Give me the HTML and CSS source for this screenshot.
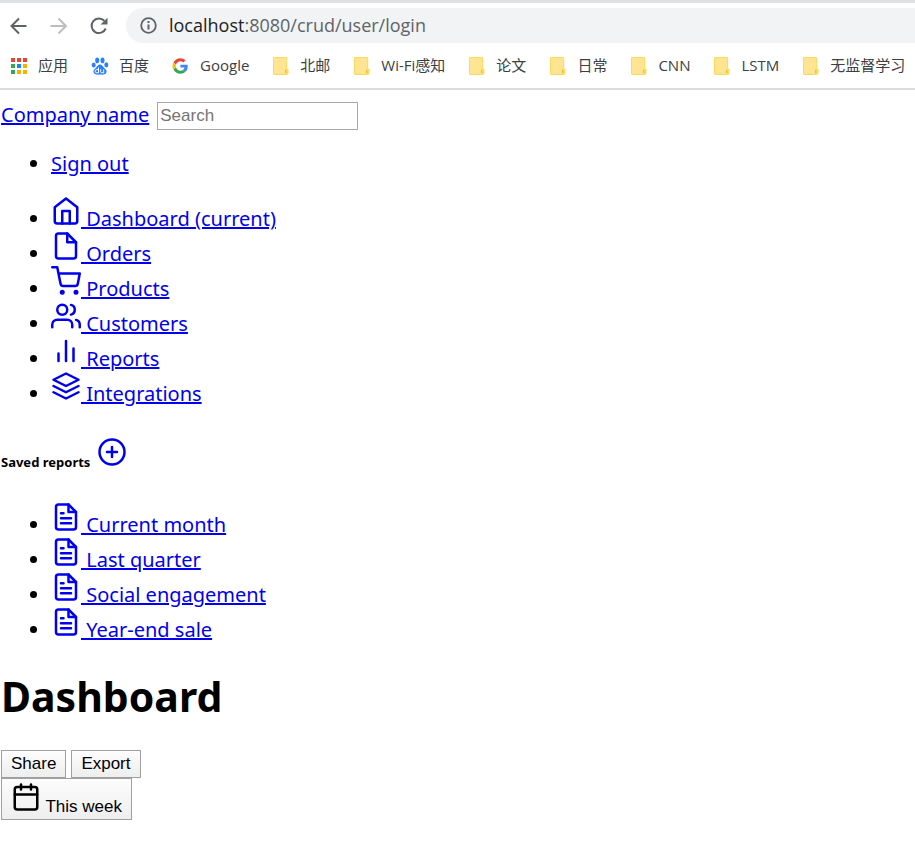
FILE: index.html
```html
<!DOCTYPE html>
<html lang="zh-CN">
<head>
<meta charset="utf-8">
<title>Dashboard</title>
<link rel="stylesheet" href="styles.css">
</head>
<body>
<svg class="defs" aria-hidden="true">
  <symbol id="folder" viewBox="0 0 18 18"><path d="M2 0h12q1 0 1 1v11h1v5q0 1-1 1H2q-1 0-1-1V1q0-1 1-1z" fill="#ffe591"/><path d="M1.500 17V1.500q0-1 1-1H14q.7 0 .7 1V11" fill="none" stroke="#ffd95c"/><path d="M2 17.500h12" stroke="#fbd75f"/><path d="M13 17.500v-5q0-1 1-1h1.500q1 0 1 1V16q0 1.500-1.500 1.500z" fill="#ffdc60"/><path d="M13 16v-3h1.300v3z" fill="#e8c13f"/></symbol>
  <symbol id="file-text" viewBox="0 0 24 24"><path d="M14 2H6a2 2 0 0 0-2 2v16a2 2 0 0 0 2 2h12a2 2 0 0 0 2-2V8z"/><path d="M14 2v6h6M16 13H8M16 17H8M10 9H8"/></symbol>
</svg>
<header class="browser">
  <div class="toolbar">
    <button class="tool" aria-label="Back"><svg width="18" height="18" viewBox="0 0 18 18"><path d="M16.500 9H2M9 1.500L1.500 9 9 16.500" fill="none" stroke="#5f6368" stroke-width="2"/></svg></button>
    <button class="tool" aria-label="Forward"><svg width="18" height="18" viewBox="0 0 18 18"><path d="M.5 9h15M8.500 1.500L16 9 8.500 16.500" fill="none" stroke="#bcbec0" stroke-width="2"/></svg></button>
    <button class="tool" aria-label="Reload"><svg width="18" height="18" viewBox="0 0 18 18"><path d="M14.300 3.800A7.300 7.300 0 1 0 15.700 11.500" fill="none" stroke="#5f6368" stroke-width="2"/><path d="M17.500.8V7.500H10.500z" fill="#5f6368"/></svg></button>
    <div class="address">
      <svg width="17" height="17" viewBox="0 0 17 17"><circle cx="8.500" cy="8.500" r="7.300" fill="none" stroke="#5f6368" stroke-width="1.800"/><path d="M8.500 4v2M8.500 7.500v5" stroke="#5f6368" stroke-width="2"/></svg>
      <span class="url"><b>localhost</b>:8080/crud/user/login</span>
    </div>
  </div>
  <nav class="bookmarks">
    <a href="#"><svg viewBox="0 0 18 18"><path fill="#ea4335" d="M1 1h4v4H1zM7 1h4v4H7zM13 1h4v4h-4z"/><path fill="#34a853" d="M1 7h4v4H1zM1 13h4v4H1z"/><path fill="#1a86f0" d="M7 7h4v4H7z"/><path fill="#fbb000" d="M13 7h4v4h-4zM7 13h4v4H7zM13 13h4v4h-4z"/></svg>应用</a>
    <a href="#"><svg viewBox="0 0 18 18"><g fill="#2b7fff"><ellipse cx="2.700" cy="8" rx="2" ry="2.600"/><ellipse cx="6.200" cy="3.400" rx="2" ry="2.800"/><ellipse cx="11.500" cy="3.400" rx="2" ry="2.800"/><ellipse cx="15.300" cy="7.800" rx="2" ry="2.600"/><path d="M9 7.500c2.200 0 2.700 2 4.300 3.400 1.800 1.500 2.500 2.500 2.200 4.200-.5 3-3.500 2.500-6.500 2.500s-6 .5-6.500-2.500c-.3-1.700.4-2.700 2.200-4.200C6.300 9.500 6.800 7.500 9 7.500z"/></g><path d="M7.500 10.500v5.300H5.800a1.600 1.600 0 0 1 0-3.200h1.700M9.700 12.300v2.500q0 1 1 1h2v-3.500" fill="none" stroke="#fff"/></svg>百度</a>
    <a href="#"><svg viewBox="-2 -4 56 56"><path fill="#EA4335" d="M24 9.500c3.540 0 6.710 1.220 9.210 3.600l6.850-6.850C35.900 2.380 30.470 0 24 0 14.620 0 6.510 5.380 2.560 13.220l7.980 6.190C12.430 13.720 17.740 9.500 24 9.500z"/><path fill="#4285F4" d="M46.980 24.550c0-1.570-.15-3.090-.38-4.550H24v9.020h12.940c-.58 2.960-2.260 5.480-4.780 7.180l7.730 6c4.510-4.180 7.090-10.360 7.090-17.650z"/><path fill="#FBBC05" d="M10.530 28.590A14.500 14.500 0 0 1 10.530 19.410L2.550 13.220a24 24 0 0 0 0 21.560z"/><path fill="#34A853" d="M24 48c6.480 0 11.930-2.130 15.890-5.810l-7.730-6c-2.150 1.450-4.920 2.300-8.160 2.300-6.260 0-11.570-4.220-13.470-9.910l-7.980 6.190C6.510 42.620 14.620 48 24 48z"/></svg>Google</a>
    <a href="#"><svg><use href="#folder"/></svg>北邮</a>
    <a href="#"><svg><use href="#folder"/></svg>Wi-Fi感知</a>
    <a href="#"><svg><use href="#folder"/></svg>论文</a>
    <a href="#"><svg><use href="#folder"/></svg>日常</a>
    <a href="#"><svg><use href="#folder"/></svg>CNN</a>
    <a href="#"><svg><use href="#folder"/></svg>LSTM</a>
    <a href="#"><svg><use href="#folder"/></svg>无监督学习</a>
  </nav>
</header>
<div class="page">
  <nav class="top">
    <a href="#">Company name</a>
    <input type="text" placeholder="Search" aria-label="Search">
  </nav>
  <ul class="list">
    <li><a href="#">Sign out</a></li>
  </ul>
  <ul class="list">
    <li><a href="#"><svg class="icon" viewBox="0 0 24 24"><path d="M3 9l9-7 9 7v11a2 2 0 0 1-2 2H5a2 2 0 0 1-2-2z"/><path d="M9 22V12h6v10"/></svg> Dashboard (current)</a></li>
    <li><a href="#"><svg class="icon" viewBox="0 0 24 24"><path d="M13 2H6a2 2 0 0 0-2 2v16a2 2 0 0 0 2 2h12a2 2 0 0 0 2-2V9z"/><path d="M13 2v7h7"/></svg> Orders</a></li>
    <li><a href="#"><svg class="icon" viewBox="0 0 24 24"><circle cx="9" cy="21" r="1"/><circle cx="20" cy="21" r="1"/><path d="M1 1h4l2.680 13.390a2 2 0 0 0 2 1.610h9.720a2 2 0 0 0 2-1.610L23 6H6"/></svg> Products</a></li>
    <li><a href="#"><svg class="icon" viewBox="0 0 24 24"><path d="M17 21v-2a4 4 0 0 0-4-4H5a4 4 0 0 0-4 4v2"/><circle cx="9" cy="7" r="4"/><path d="M23 21v-2a4 4 0 0 0-3-3.870M16 3.130a4 4 0 0 1 0 7.750"/></svg> Customers</a></li>
    <li><a href="#"><svg class="icon" viewBox="0 0 24 24"><path d="M18 20V10M12 20V4M6 20v-6"/></svg> Reports</a></li>
    <li><a href="#"><svg class="icon" viewBox="0 0 24 24"><path d="M12 2L2 7l10 5 10-5zM2 17l10 5 10-5M2 12l10 5 10-5"/></svg> Integrations</a></li>
  </ul>
  <h2 class="saved">Saved reports <a href="#" aria-label="Add a report"><svg class="icon" viewBox="0 0 24 24"><circle cx="12" cy="12" r="10"/><path d="M12 8v8M8 12h8"/></svg></a></h2>
  <ul class="list">
    <li><a href="#"><svg class="icon"><use href="#file-text"/></svg> Current month</a></li>
    <li><a href="#"><svg class="icon"><use href="#file-text"/></svg> Last quarter</a></li>
    <li><a href="#"><svg class="icon"><use href="#file-text"/></svg> Social engagement</a></li>
    <li><a href="#"><svg class="icon"><use href="#file-text"/></svg> Year-end sale</a></li>
  </ul>
  <main>
    <h1>Dashboard</h1>
    <div class="actions">
      <button>Share</button>
      <button>Export</button>
    </div>
    <button class="week"><svg class="icon" viewBox="0 0 24 24"><rect x="3" y="4" width="18" height="18" rx="2"/><path d="M16 2v4M8 2v4M3 10h18"/></svg> This week</button>
  </main>
</div>
</body>
</html>
```
FILE: styles.css
```css
* { box-sizing: border-box; }
body {
  margin: 0;
  background: #fff;
  color: #000;
  font: 20px/25px "Noto Sans", "Noto Sans CJK SC", sans-serif;
}
.defs { display: none; }

.browser {
  border-top: 3px solid #dee1e6;
  border-bottom: 2px solid #dadce0;
  overflow: hidden;
  font-family: "Open Sans", "Noto Sans CJK SC", sans-serif;
}
.toolbar {
  display: flex;
  align-items: center;
  gap: 22px;
  padding: 5px 0 0 10px;
}
.tool {
  display: flex;
  padding: 0;
  border: 0;
  background: none;
}
.address {
  flex: 1;
  display: flex;
  align-items: center;
  gap: 12px;
  height: 35px;
  margin-left: -4px;
  padding-left: 14px;
  border-radius: 18px 0 0 18px;
  background: #f1f3f4;
}
.url {
  color: #5f6368;
  font-size: 18px;
}
.url b {
  color: #202124;
  font-weight: 400;
}
.bookmarks {
  display: flex;
  gap: 23px;
  height: 45px;
  padding-left: 10px;
  align-items: center;
}
.bookmarks a {
  display: flex;
  align-items: center;
  gap: 10px;
  color: #3c4043;
  font-size: 15px;
  text-decoration: none;
  white-space: nowrap;
}
.bookmarks svg { width: 18px; height: 18px; }

.page { padding: 12px 1px 20px; }
.page a { color: #00e; }
.top {
  display: flex;
  align-items: flex-start;
  gap: 8px;
  padding-bottom: 1px;
}
.top input {
  width: 201px;
  height: 28px;
  padding: 1px 2px;
  border: 1px solid #a9a9a9;
  font: 17px "Liberation Sans", sans-serif;
}
.top input::placeholder { color: #757575; }
.list {
  margin: 20px 0;
  padding-left: 50px;
}
.icon {
  width: 30px;
  height: 30px;
  fill: none;
  stroke: currentColor;
  stroke-width: 2;
  stroke-linecap: round;
  stroke-linejoin: round;
}
.saved {
  margin: 31px 0 27px;
  font-size: 13px;
}
.saved a { margin-left: 3px; }
h1 {
  margin: 28px 0;
  font-size: 41px;
  line-height: 52px;
}
.actions {
  display: flex;
  gap: 5px;
}
main button {
  height: 28px;
  padding: 0 9px;
  border: 1px solid #a0a0a0;
  background: linear-gradient(#fdfdfd, #eee);
  color: #000;
  font: 17px "Liberation Sans", sans-serif;
}
main .week { height: 42px; }
```
